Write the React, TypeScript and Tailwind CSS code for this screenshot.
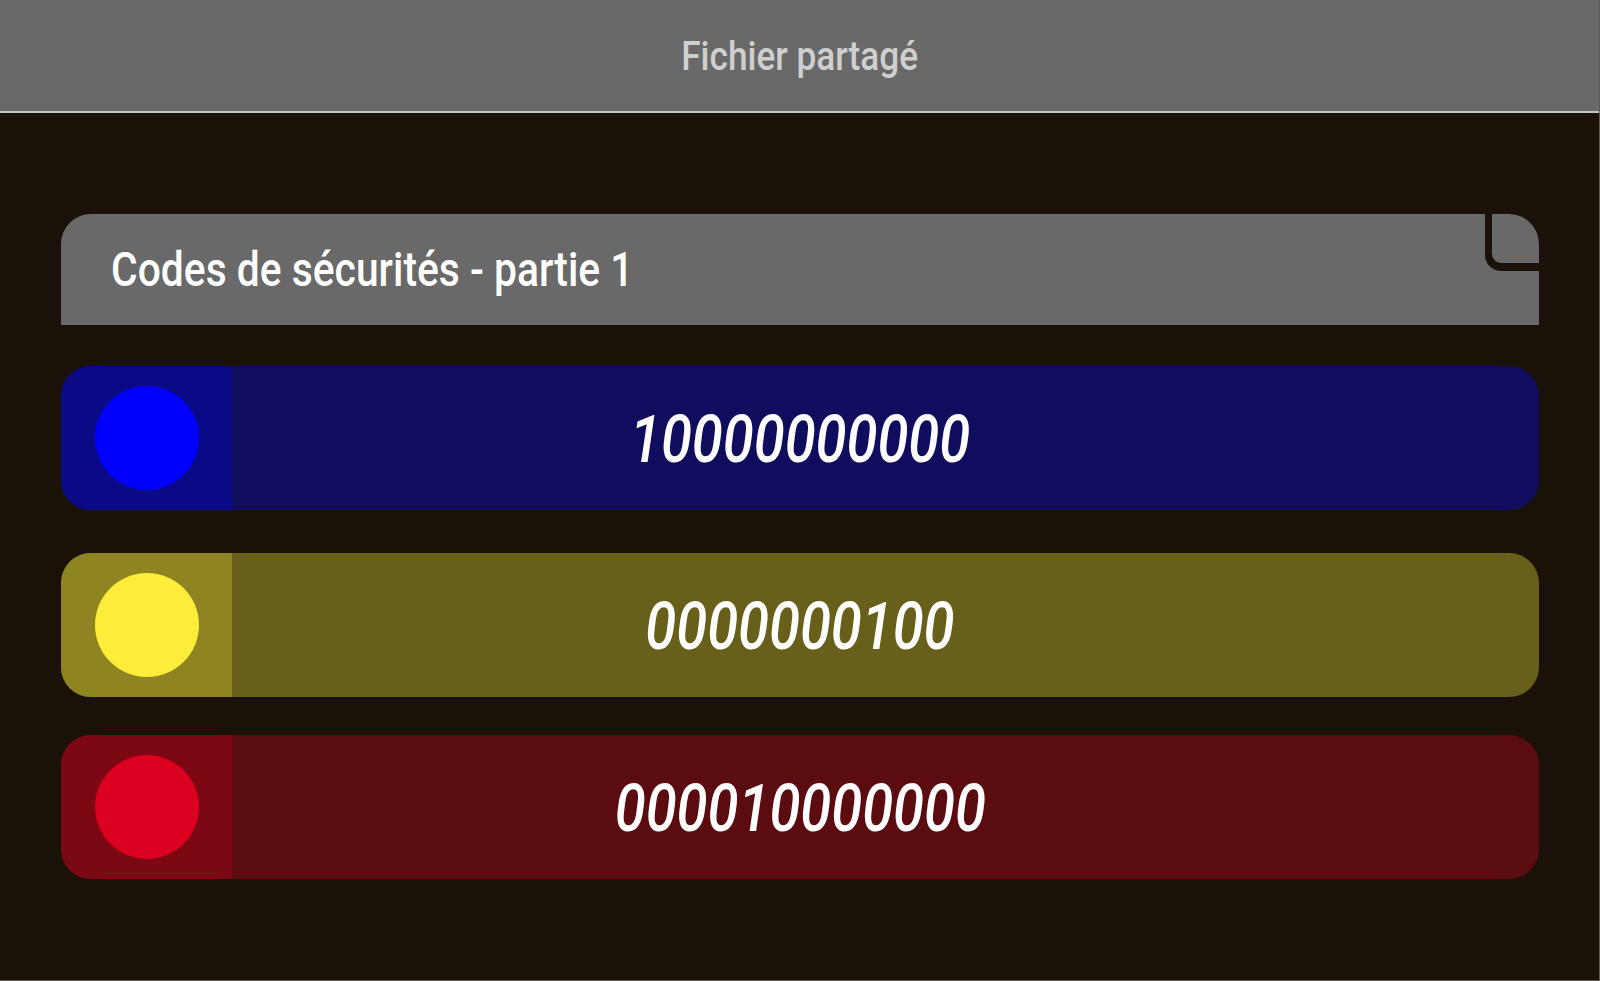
import React from "react";

type Code = {
  value: string;
  side: string;
  body: string;
  dot: string;
  mt: string;
};

const codes: Code[] = [
  { value: "10000000000", side: "bg-[#0b0a86]", body: "bg-[#100c5e]", dot: "bg-[#0000ff]", mt: "mt-[41px]" },
  { value: "0000000100", side: "bg-[#8e8522]", body: "bg-[#68601a]", dot: "bg-[#fdec3a]", mt: "mt-[43px]" },
  { value: "000010000000", side: "bg-[#7c0814]", body: "bg-[#5b0c11]", dot: "bg-[#db0020]", mt: "mt-[38px]" },
];

function CodeRow({ code }: { code: Code }) {
  return (
    <div className={`${code.mt} h-[144px] rounded-[30px] overflow-hidden grid grid-cols-[171px_1fr] ${code.body}`}>
      {/* colour swatch */}
      <div className={`col-start-1 row-start-1 flex items-center justify-center ${code.side}`}>
        <div className={`w-[104px] h-[104px] rounded-full ${code.dot}`} />
      </div>
      {/* value, centred over the whole row */}
      <div className="col-start-1 col-end-3 row-start-1 flex items-center justify-center pt-[3px]">
        <span className="inline-block scale-x-85 italic text-white text-[66px] leading-none font-medium">
          {code.value}
        </span>
      </div>
    </div>
  );
}

export default function App() {
  return (
    <div className="w-[1600px] h-[981px] bg-[#1a1209] flex flex-col overflow-hidden font-['Roboto',sans-serif] border-r border-b border-[#5a5a5a]">
      {/* Top bar */}
      <div className="h-[113px] shrink-0 bg-[#696969] border-b-2 border-[#c4c4c4] flex items-center justify-center pt-[3px]">
        <span className="inline-block scale-x-88 text-[40px] font-medium text-[#cfcfcf] leading-none">
          Fichier partagé
        </span>
      </div>

      <div className="flex-1 pt-[101px] pl-[61px] pr-[60px]">
        {/* File title card */}
        <div className="relative h-[111px] bg-[#696969] rounded-t-[30px] overflow-hidden flex items-center pl-[50px]">
          <span className="inline-block origin-left scale-x-85 text-[48px] font-medium text-white leading-none">
            Codes de sécurités - partie 1
          </span>
          {/* folded corner */}
          <div className="absolute top-0 right-0 w-[54px] h-[57px] bg-[#1a1209] rounded-bl-[16px] flex">
            <div className="ml-[7px] mb-[8px] flex-1 bg-[#696969] rounded-tr-[30px] rounded-bl-[9px]" />
          </div>
        </div>

        {codes.map((c) => (
          <CodeRow key={c.value} code={c} />
        ))}
      </div>
    </div>
  );
}
